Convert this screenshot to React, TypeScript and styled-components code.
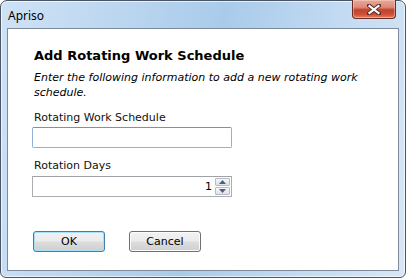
import React from "react";
import styled, { createGlobalStyle } from "styled-components";

const Global = createGlobalStyle`
  html, body { margin: 0; padding: 0; background: #ffffff; overflow: hidden; }
  #root { width: 406px; height: 278px; }
`;

const Frame = styled.div`
  box-sizing: border-box;
  width: 406px;
  height: 278px;
  border: 1px solid #4a5566;
  border-radius: 7px 7px 6px 6px;
  background: linear-gradient(100deg, #cfe2f6 0%, #bdd7f0 25%, #a9cbea 50%, #c2daf2 75%, #d7e7f7 100%);
  box-shadow: inset 0 0 0 1px rgba(255, 255, 255, 0.65);
  display: flex;
  flex-direction: column;
  font-family: "DejaVu Sans", Verdana, sans-serif;
`;

const TitleBar = styled.div`
  height: 27px;
  display: flex;
  align-items: flex-start;
  justify-content: space-between;
  padding: 0 9px 0 7px;
`;

const Title = styled.div`
  font-family: "Noto Sans", "Open Sans", sans-serif;
  font-size: 12px;
  line-height: 16px;
  color: #000;
  padding-top: 7px;
`;

const CloseButton = styled.div`
  box-sizing: border-box;
  width: 44px;
  height: 19px;
  margin-top: -1px;
  border: 1px solid #6b2b22;
  border-top: none;
  border-radius: 0 0 4px 4px;
  background: linear-gradient(#e9a898 0%, #dc8a78 40%, #c3412c 55%, #cd5036 80%, #e28363 100%);
  box-shadow: inset 0 0 0 1px rgba(255, 220, 210, 0.45);
  display: flex;
  align-items: center;
  justify-content: center;
`;

const Client = styled.div`
  flex: 1;
  margin: 0 6px 6px 6px;
  background: #ffffff;
  border: 1px solid #7d8b9b;
  padding: 19px 26px 0 26px;
  display: flex;
  flex-direction: column;
`;

const Heading = styled.div`
  font-size: 13px;
  font-weight: bold;
  line-height: 16px;
  color: #000;
`;

const Intro = styled.div`
  margin-top: 6px;
  font-size: 11px;
  font-style: italic;
  line-height: 15px;
  color: #000;
`;

const Label = styled.div<{ $top: number }>`
  margin-top: ${(p) => p.$top}px;
  font-size: 11px;
  line-height: 14px;
  color: #111;
`;

const TextInput = styled.div`
  box-sizing: border-box;
  margin-top: 2px;
  margin-left: -2px;
  width: 200px;
  height: 21px;
  border: 1px solid #8fb2d6;
  border-top-color: #6d95c0;
  border-radius: 2px;
  background: #fff;
`;

const NumberInput = styled.div`
  box-sizing: border-box;
  margin-top: 3px;
  margin-left: -2px;
  width: 200px;
  height: 21px;
  border: 1px solid #abadb3;
  border-top-color: #a0a2a8;
  background: #fff;
  display: flex;
  align-items: center;
  justify-content: flex-end;
  padding-right: 1px;
`;

const NumberValue = styled.span`
  font-size: 11px;
  line-height: 14px;
  color: #000;
  margin-right: 3px;
`;

const Spinner = styled.div`
  width: 15px;
  height: 17px;
  display: flex;
  flex-direction: column;
  gap: 1px;
`;

const SpinHalf = styled.div`
  box-sizing: border-box;
  flex: 1;
  border: 1px solid #b7bcc4;
  border-radius: 1px;
  background: linear-gradient(#f6f7f8, #dde1e6);
  display: flex;
  align-items: center;
  justify-content: center;
`;

const Buttons = styled.div`
  margin-top: 34px;
  display: flex;
  gap: 24px;
  margin-left: -1px;
`;

const Button = styled.div<{ $focused?: boolean }>`
  box-sizing: border-box;
  width: 72px;
  height: 21px;
  border: 1px solid ${(p) => (p.$focused ? "#3c7fb1" : "#707070")};
  border-radius: 3px;
  background: linear-gradient(#f2f2f2 0%, #ebebeb 48%, #dddddd 52%, #cfcfcf 100%);
  box-shadow: ${(p) =>
    p.$focused ? "inset 0 0 0 1px #a8e1f7" : "inset 0 0 0 1px #fcfcfc"};
  display: flex;
  align-items: center;
  justify-content: center;
  font-size: 11px;
  line-height: 14px;
  color: #000;
`;

export default function App() {
  return (
    <>
      <Global />
      <Frame>
        <TitleBar>
          <Title>Apriso</Title>
          <CloseButton>
            <svg width="14" height="11" viewBox="0 0 14 11">
              <path
                d="M2 1.5 L12 9.5 M12 1.5 L2 9.5"
                stroke="#5a2a24"
                strokeWidth="4"
                strokeLinecap="square"
              />
              <path
                d="M2.5 2 L11.5 9 M11.5 2 L2.5 9"
                stroke="#ffffff"
                strokeWidth="2.2"
                strokeLinecap="square"
              />
            </svg>
          </CloseButton>
        </TitleBar>
        <Client>
          <Heading>Add Rotating Work Schedule</Heading>
          <Intro>
            Enter the following information to add a new rotating work schedule.
          </Intro>
          <Label $top={11}>Rotating Work Schedule</Label>
          <TextInput />
          <Label $top={11}>Rotation Days</Label>
          <NumberInput>
            <NumberValue>1</NumberValue>
            <Spinner>
              <SpinHalf>
                <svg width="7" height="4" viewBox="0 0 7 4">
                  <path d="M0 4 L3.5 0 L7 4 Z" fill="#4e5f80" />
                </svg>
              </SpinHalf>
              <SpinHalf>
                <svg width="7" height="4" viewBox="0 0 7 4">
                  <path d="M0 0 L3.5 4 L7 0 Z" fill="#4e5f80" />
                </svg>
              </SpinHalf>
            </Spinner>
          </NumberInput>
          <Buttons>
            <Button $focused>OK</Button>
            <Button>Cancel</Button>
          </Buttons>
        </Client>
      </Frame>
    </>
  );
}
